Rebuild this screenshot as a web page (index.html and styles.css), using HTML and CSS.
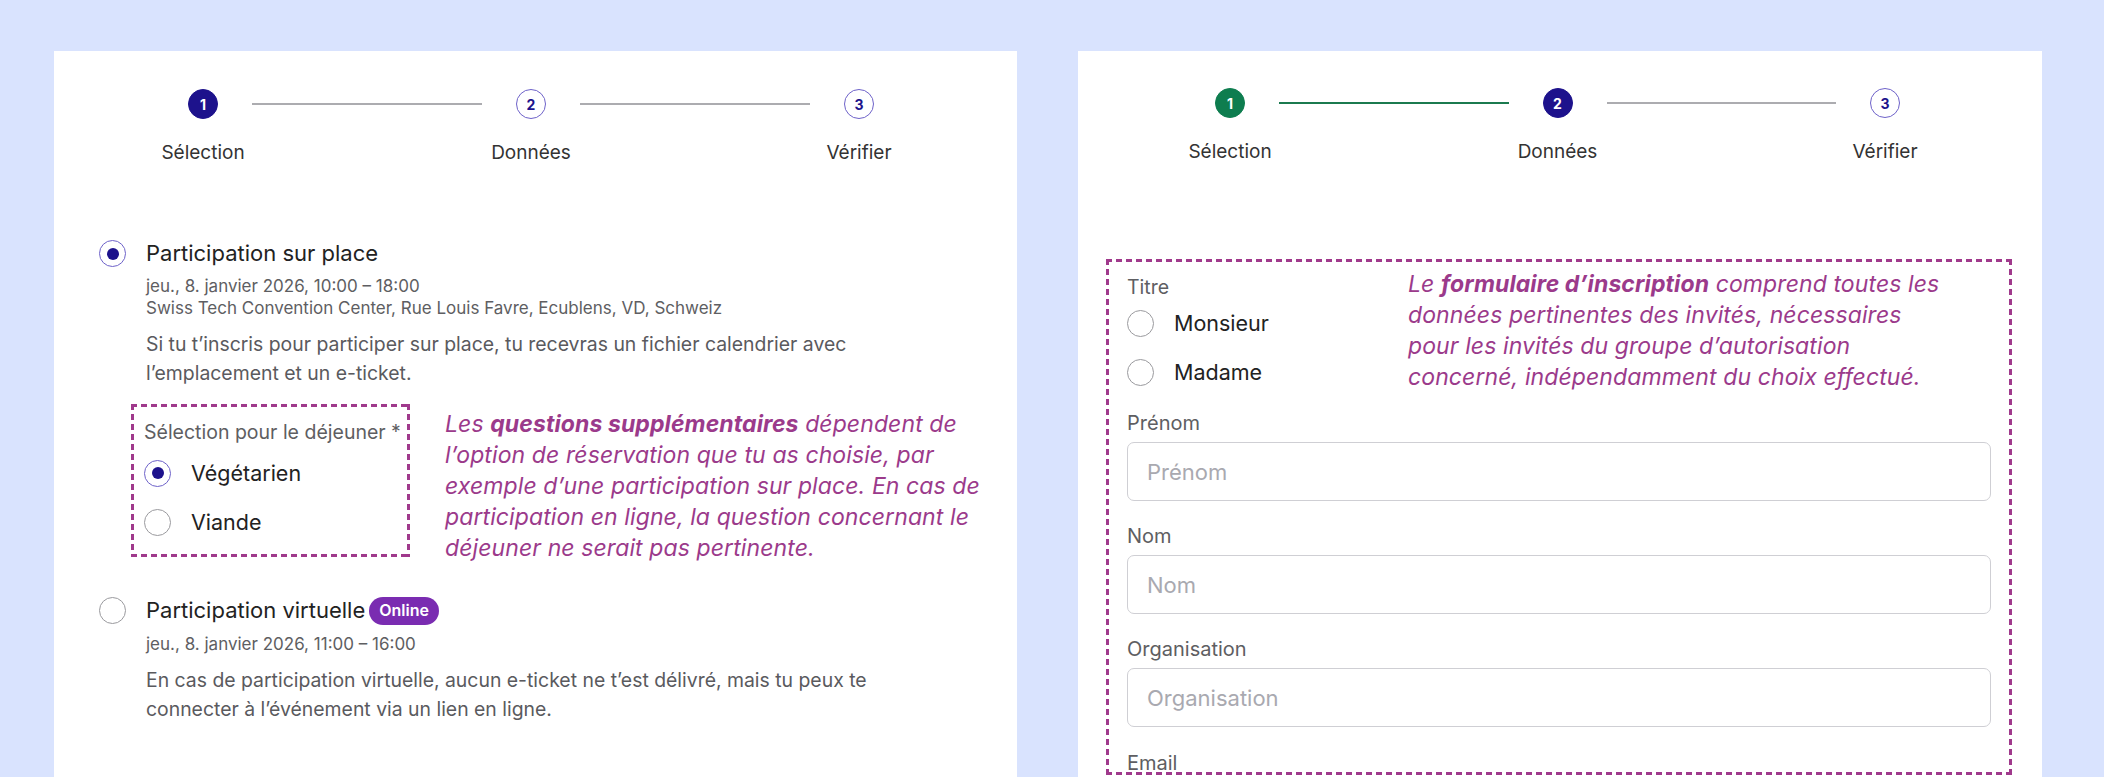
FILE: index.html
```html
<!DOCTYPE html>
<html lang="fr">
<head>
<meta charset="utf-8">
<title>Inscription</title>
<link rel="stylesheet" href="styles.css">
</head>
<body>
<div class="page">
  <section class="panel panel-left">
    <div class="stepper stepper-left">
      <div class="step"><span class="num num-current">1</span><span class="step-label">Sélection</span></div>
      <div class="line"></div>
      <div class="step"><span class="num">2</span><span class="step-label">Données</span></div>
      <div class="line"></div>
      <div class="step"><span class="num">3</span><span class="step-label">Vérifier</span></div>
    </div>

    <div class="options">
      <div class="option">
        <span class="radio radio-checked"></span>
        <div class="opt-body">
          <div class="opt-title">Participation sur place</div>
          <div class="opt-meta first">jeu., 8. janvier 2026, 10:00 – 18:00</div>
          <div class="opt-meta">Swiss Tech Convention Center, Rue Louis Favre, Ecublens, VD, Schweiz</div>
          <p class="opt-desc">Si tu t’inscris pour participer sur place, tu recevras un fichier calendrier avec<br>l’emplacement et un e-ticket.</p>
          <div class="extra">
            <div class="dashed q-box">
              <div class="field-label">Sélection pour le déjeuner *</div>
              <div class="choice choice-first"><span class="radio radio-checked"></span><span>Végétarien</span></div>
              <div class="choice"><span class="radio"></span><span>Viande</span></div>
            </div>
            <p class="note">Les <b>questions supplémentaires</b> dépendent de<br>l’option de réservation que tu as choisie, par<br>exemple d’une participation sur place. En cas de<br>participation en ligne, la question concernant le<br>déjeuner ne serait pas pertinente.</p>
          </div>
        </div>
      </div>

      <div class="option option-second">
        <span class="radio"></span>
        <div class="opt-body">
          <div class="opt-title">Participation virtuelle <span class="badge">Online</span></div>
          <div class="opt-meta first">jeu., 8. janvier 2026, 11:00 – 16:00</div>
          <p class="opt-desc">En cas de participation virtuelle, aucun e-ticket ne t’est délivré, mais tu peux te<br>connecter à l’événement via un lien en ligne.</p>
        </div>
      </div>
    </div>
  </section>

  <section class="panel panel-right">
    <div class="stepper stepper-right">
      <div class="step"><span class="num num-done">1</span><span class="step-label">Sélection</span></div>
      <div class="line line-done"></div>
      <div class="step"><span class="num num-current">2</span><span class="step-label">Données</span></div>
      <div class="line"></div>
      <div class="step"><span class="num">3</span><span class="step-label">Vérifier</span></div>
    </div>

    <div class="dashed form-box">
      <div class="form-top">
        <div class="title-group">
          <div class="field-label">Titre</div>
          <div class="choice choice-first-r"><span class="radio"></span><span>Monsieur</span></div>
          <div class="choice"><span class="radio"></span><span>Madame</span></div>
        </div>
        <p class="note note-right">Le <b>formulaire d’inscription</b> comprend toutes les<br>données pertinentes des invités, nécessaires<br>pour les invités du groupe d’autorisation<br>concerné, indépendamment du choix effectué.</p>
      </div>
      <div class="field field-first">
        <div class="field-label">Prénom</div>
        <div class="input">Prénom</div>
      </div>
      <div class="field">
        <div class="field-label">Nom</div>
        <div class="input">Nom</div>
      </div>
      <div class="field">
        <div class="field-label">Organisation</div>
        <div class="input">Organisation</div>
      </div>
      <div class="field field-last">
        <div class="field-label">Email</div>
      </div>
    </div>
  </section>
</div>
</body>
</html>
```

FILE: styles.css
```css
* { box-sizing: border-box; }

html, body {
  margin: 0;
  padding: 0;
  height: 100%;
  overflow: hidden;
}

body {
  background: #d9e3fe;
  font-family: "Inter", "Noto Sans", sans-serif;
  color: #222;
}

.page {
  display: flex;
  gap: 61px;
  padding: 51px 0 0 54px;
}

.panel {
  background: #fff;
  min-height: 760px;
}

.panel-left { width: 963px; }
.panel-right { width: 964px; }

/* Stepper */
.stepper {
  display: flex;
  align-items: flex-start;
}

.stepper-left { padding: 38px 109px 0 100px; }
.stepper-right { padding: 37px 108px 0 103px; }

.step {
  width: 98px;
  display: flex;
  flex-direction: column;
  align-items: center;
}

.num {
  width: 30px;
  height: 30px;
  border-radius: 50%;
  border: 1.5px solid #6e62c9;
  color: #1d138c;
  background: #fff;
  display: flex;
  align-items: center;
  justify-content: center;
  font-size: 14px;
  font-weight: 700;
}

.num-current {
  background: #1d128c;
  border-color: #1d128c;
  color: #fff;
}

.num-done {
  background: #0e7d4f;
  border-color: #0e7d4f;
  color: #fff;
}

.step-label {
  margin-top: 23px;
  font-size: 19px;
  line-height: 21px;
  color: #333;
  white-space: nowrap;
}

.line {
  flex: 1;
  height: 2px;
  margin-top: 14px;
  background: #acacb0;
}

.line-done { background: #1b7a4f; }

/* Radios */
.radio {
  flex: 0 0 27px;
  width: 27px;
  height: 27px;
  border-radius: 50%;
  border: 1.5px solid #9a9a9e;
  background: #fff;
  display: flex;
  align-items: center;
  justify-content: center;
}

.radio-checked { border-color: #6e62c9; }

.radio-checked::after {
  content: "";
  width: 12px;
  height: 12px;
  border-radius: 50%;
  background: #1d128c;
}

/* Options */
.options { padding: 77px 40px 0 45px; }

.option {
  display: flex;
  gap: 20px;
  align-items: flex-start;
}

.option-second { margin-top: 33px; }

.opt-body { flex: 1; }

.opt-title {
  display: flex;
  align-items: center;
  gap: 4px;
  min-height: 27px;
  font-size: 22px;
  line-height: 27px;
  color: #222;
}

.badge {
  display: inline-flex;
  align-items: center;
  height: 28px;
  padding: 0 10px;
  border-radius: 14px;
  background: #7a2cb1;
  color: #fff;
  font-size: 16px;
  font-weight: 600;
}

.opt-meta {
  font-size: 17px;
  line-height: 21.5px;
  color: #5e5e62;
}

.opt-meta.first { margin-top: 9px; }

.opt-desc {
  margin: 11px 0 0;
  font-size: 19.4px;
  line-height: 29px;
  color: #5a5a5e;
}

.extra {
  display: flex;
  align-items: flex-start;
  gap: 35px;
  margin: 15.5px 0 0 -15px;
}

.dashed {
  --dc: #a0398c;
  background:
    repeating-linear-gradient(90deg, var(--dc) 0 6px, transparent 6px 10px) left top / 100% 3px no-repeat,
    repeating-linear-gradient(90deg, var(--dc) 0 6px, transparent 6px 10px) left bottom / 100% 3px no-repeat,
    repeating-linear-gradient(180deg, var(--dc) 0 6px, transparent 6px 10px) left top / 3px 100% no-repeat,
    repeating-linear-gradient(180deg, var(--dc) 0 6px, transparent 6px 10px) right top / 3px 100% no-repeat;
}

.q-box {
  flex: 0 0 279px;
  width: 279px;
  padding: 17px 6px 21px 13px;
}

.field-label {
  font-size: 19.5px;
  line-height: 22px;
  color: #5e5e62;
  white-space: nowrap;
}

.choice {
  display: flex;
  align-items: center;
  gap: 20px;
  margin-top: 22px;
  font-size: 21.5px;
  line-height: 27px;
  color: #222;
}

.choice-first { margin-top: 17px; }

.note {
  margin: 5px 0 0;
  font-size: 23px;
  line-height: 31px;
  letter-spacing: 0.1px;
  font-style: italic;
  color: #9b3a8b;
  white-space: nowrap;
}

.note b { font-weight: 700; }

/* Right form */
.form-box {
  margin: 97px 30px 0 28px;
  padding: 17px 21px 2px 21px;
}

.form-top {
  display: flex;
  align-items: flex-start;
}

.title-group { flex: 0 0 281px; }

.choice-first-r { margin-top: 12px; }

.note-right { margin-top: -7px; }

.field { margin-top: 24px; }
.field-first { margin-top: 19px; }
.field-last { margin-top: 26px; }

.field .field-label { margin-bottom: 8px; font-size: 20px; }

.input {
  height: 59px;
  border: 1.5px solid #cfcfd4;
  border-radius: 7px;
  padding-left: 19px;
  display: flex;
  align-items: center;
  font-size: 22px;
  color: #a9a9b0;
}

.field-last .field-label { margin-bottom: 0; line-height: 20px; }
```
